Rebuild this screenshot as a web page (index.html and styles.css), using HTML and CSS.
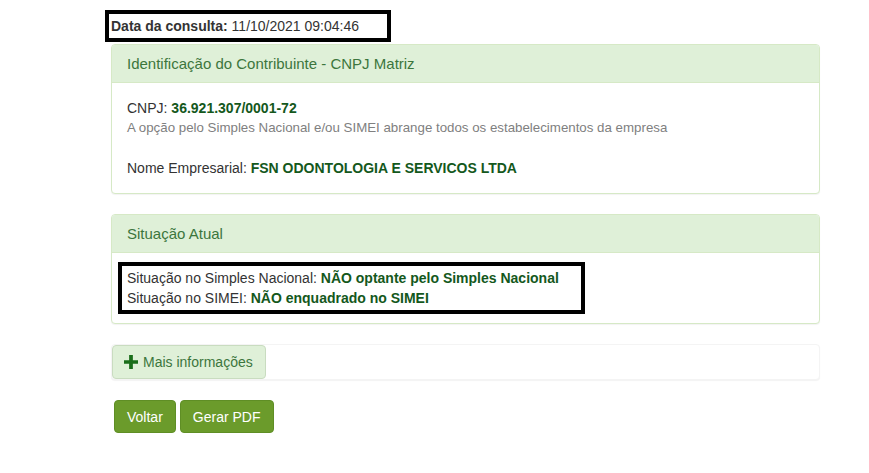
FILE: index.html
```html
<!DOCTYPE html>
<html lang="pt-BR">
<head>
<meta charset="utf-8">
<title>Consulta Optantes</title>
<link rel="stylesheet" href="styles.css">
</head>
<body>
<div class="page">
  <div class="consulta">
    <b>Data da consulta:</b> 11/10/2021 09:04:46
    <span class="mark mark-date"></span>
  </div>

  <div class="panel">
    <div class="panel-heading"><h3 class="panel-title">Identificação do Contribuinte - CNPJ Matriz</h3></div>
    <div class="panel-body">
      <div>CNPJ: <span class="val">36.921.307/0001-72</span></div>
      <div class="muted">A opção pelo Simples Nacional e/ou SIMEI abrange todos os estabelecimentos da empresa</div>
      <div class="spacer"></div>
      <div>Nome Empresarial: <span class="val">FSN ODONTOLOGIA E SERVICOS LTDA</span></div>
    </div>
  </div>

  <div class="panel">
    <div class="panel-heading"><h3 class="panel-title">Situação Atual</h3></div>
    <div class="panel-body">
      <div>Situação no Simples Nacional: <span class="val">NÃO optante pelo Simples Nacional</span></div>
      <div>Situação no SIMEI: <span class="val">NÃO enquadrado no SIMEI</span></div>
    </div>
    <span class="mark mark-sit"></span>
  </div>

  <div class="panel panel-more">
    <button class="btn btn-more" type="button"><svg class="plus" viewBox="0 0 12 12" width="14" height="14"><path d="M4.4 0h3.2v4.4H12v3.2H7.6V12H4.4V7.6H0V4.4h4.4z"/></svg>Mais informações</button>
  </div>

  <div class="actions">
    <button class="btn btn-go" type="button">Voltar</button>
    <button class="btn btn-go" type="button">Gerar PDF</button>
  </div>
</div>
</body>
</html>
```

FILE: styles.css
```css
* { box-sizing: border-box; }
html, body { margin: 0; padding: 0; background: #fff; }
body {
  font-family: "Liberation Sans", Arial, sans-serif;
  font-size: 14px;
  line-height: 20px;
  color: #333;
}
.page {
  width: 709px;
  margin-left: 111px;
  padding-top: 16px;
}
.consulta {
  position: relative;
  margin-bottom: 8px;
}
.consulta b { font-weight: bold; }
.mark {
  position: absolute;
  border: 4px solid #000;
  pointer-events: none;
}
.mark-date { left: -6px; top: -6px; width: 286px; height: 32px; }
.mark-sit { left: 6px; top: 47px; width: 467px; height: 52px; }

.panel {
  position: relative;
  background: #fff;
  border: 1px solid #d6e9c6;
  border-radius: 4px;
  box-shadow: 0 1px 1px rgba(0,0,0,.05);
  margin-bottom: 20px;
}
.panel-heading {
  background: #dff0d8;
  color: #3c763d;
  padding: 10px 15px;
  border-bottom: 1px solid #d6e9c6;
  border-radius: 3px 3px 0 0;
}
.panel-title {
  margin: 0;
  font-size: 15px;
  line-height: 17px;
  font-weight: normal;
}
.panel-body { padding: 15px; }
.val { color: #14581c; font-weight: bold; }
.muted { color: #808080; font-size: 13.3px; }
.spacer { height: 20px; }

.panel-more {
  border-color: #f4f4f4;
}
.btn {
  display: inline-block;
  font-family: inherit;
  font-size: 14px;
  line-height: 20px;
  padding: 6px 12px;
  border-radius: 4px;
  border: 1px solid transparent;
  cursor: pointer;
  vertical-align: middle;
}
.btn-more {
  display: flex;
  align-items: center;
  gap: 5px;
  background: #dff0d8;
  border-color: #c9dcc0;
  color: #3c763d;
  padding: 6px 11px;
  width: 154px;
  height: 34px;
}
.plus { fill: #1a6e1a; }
.actions {
  display: flex;
  gap: 4px;
  padding-left: 3px;
}
.btn-go {
  background: #6b9b2b;
  border-color: #5f8e25;
  color: #fff;
  padding: 6px 12px;
  height: 33px;
}
```
